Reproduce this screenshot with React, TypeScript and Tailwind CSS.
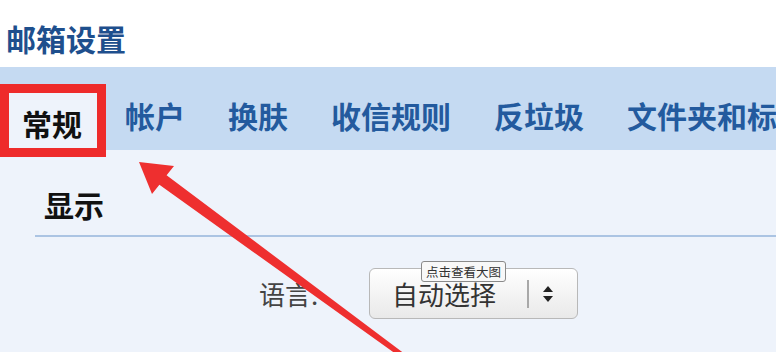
import React from "react";

const font = { fontFamily: '"Noto Sans CJK SC", "Noto Sans", sans-serif' };

export default function App() {
  const tabs = ["帐户", "换肤", "收信规则", "反垃圾", "文件夹和标签"];
  return (
    <div className="relative w-[776px] h-[352px] overflow-hidden bg-white" style={font}>
      <div className="h-[67px] pl-[6px] pt-[22px]">
        <div className="text-[30px] leading-[32px] font-bold text-[#1e4f8d]">邮箱设置</div>
      </div>
      <div className="h-[83px] bg-[#c5daf2] flex items-start whitespace-nowrap">
        <div className="relative z-10 shrink-0 mt-[17px] h-[73px] w-[106px] border-[9px] border-[#ee2b2b] bg-[#eef3fb] pl-[13px] pt-[4px] flex items-center">
          <span className="text-[30px] leading-[32px] font-bold text-[#111]">常规</span>
        </div>
        <div className="ml-[19px] h-full flex items-center gap-[43px] pt-[12px]">
          {tabs.map((t) => (
            <span key={t} className="shrink-0 text-[30px] leading-[32px] font-bold text-[#235a9e]">
              {t}
            </span>
          ))}
        </div>
      </div>
      <div className="h-[202px] bg-[#eef3fb] pt-[37px]">
        <div className="pl-[44px] text-[30px] leading-[34px] font-bold text-[#111]">显示</div>
        <div className="ml-[35px] mt-[14px] h-[2px] bg-[#abc4e3]" />
        <div className="mt-[31px] flex items-center">
          <div className="ml-[259px] w-[110px] text-[26px] leading-[30px] text-[#444]">语言:</div>
          <div className="relative w-[209px] h-[51px] rounded-[6px] border border-[#b8b8b8] bg-gradient-to-b from-white to-[#e9e9e9] flex items-center">
            <span className="ml-[22px] text-[26px] leading-[30px] text-[#333]">自动选择</span>
            <div className="ml-auto h-[28px] w-[2px] bg-[#a8a8a8]" />
            <svg className="ml-[14px] mr-[24px]" width="10" height="16" viewBox="0 0 10 16">
              <path d="M5 0 L10 6 L0 6 Z" fill="#222" />
              <path d="M0 10 L10 10 L5 16 Z" fill="#222" />
            </svg>
            <div className="absolute left-[51px] top-[-8px] h-[21px] px-[4px] rounded-[3px] border border-[#8a8a8a] bg-[#f8f8f8] text-[12.5px] leading-[19px] text-[#333]">
              点击查看大图
            </div>
          </div>
        </div>
      </div>
      <svg className="absolute left-0 top-0 pointer-events-none" width="776" height="352" viewBox="0 0 776 352">
        <polygon
          points="139,162 174,166 166.6,175.2 411.5,359 408.5,363 159.4,184.8 152,194"
          fill="#ee2f2f"
        />
      </svg>
    </div>
  );
}
